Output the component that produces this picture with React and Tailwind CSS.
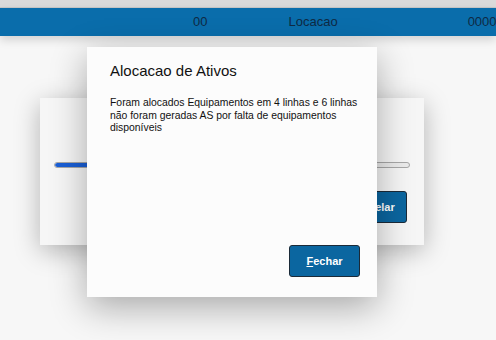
export default function App() {
  return (
    <div className="relative w-[496px] h-[340px] overflow-hidden bg-[#f7f7f7] font-['Liberation_Sans',Arial,sans-serif]">
      <div className="h-[8px] bg-[#dadada] border-b border-[#c8c8c8]" />
      <div className="h-[28px] bg-[#0a6dab] shadow-[0_4px_10px_rgba(0,0,0,0.15)] flex items-center text-[13px] text-[#0f2a44] whitespace-nowrap">
        <span className="ml-[193px]">00</span>
        <span className="ml-[81px]">Locacao</span>
        <span className="ml-[130px]">0000</span>
      </div>

      {/* back dialog */}
      <div className="absolute left-[40px] top-[98px] w-[384px] h-[147px] bg-[#f6f6f6] shadow-[0_6px_24px_rgba(0,0,0,0.28)] flex flex-col">
        <div className="mt-[64px] mx-[14px] h-[6px] rounded-full border border-[#a8a8a8] bg-[#ececec] overflow-hidden">
          <div className="h-full w-[30%] bg-[#1a5fd6] rounded-full" />
        </div>
        <div className="mt-[23px] mr-[17px] self-end w-[71px] h-[32px] rounded-[3px] border border-[#1b2a38] bg-[#0b66a0] text-white text-[11px] font-bold flex items-center justify-center">
          Cancelar
        </div>
      </div>

      {/* front dialog */}
      <div className="absolute left-[87px] top-[47px] w-[290px] h-[250px] bg-[#fcfcfc] shadow-[0_10px_34px_rgba(0,0,0,0.32)] flex flex-col pl-[23px] pr-[17px]">
        <div className="mt-[15px] text-[15px] leading-[18px] text-[#111]">Alocacao de Ativos</div>
        <div className="mt-[17px] w-[254px] text-[10.4px] leading-[12.5px] text-[#111]">
          Foram alocados Equipamentos em 4 linhas e 6 linhas não foram geradas AS por falta de equipamentos disponíveis
        </div>
        <div className="mt-auto mb-[20px] self-end w-[71px] h-[32px] rounded-[3px] border border-[#1b2a38] bg-[#0b66a0] text-white text-[11px] font-bold flex items-center justify-center">
          <span><span className="underline">F</span>echar</span>
        </div>
      </div>
    </div>
  );
}
